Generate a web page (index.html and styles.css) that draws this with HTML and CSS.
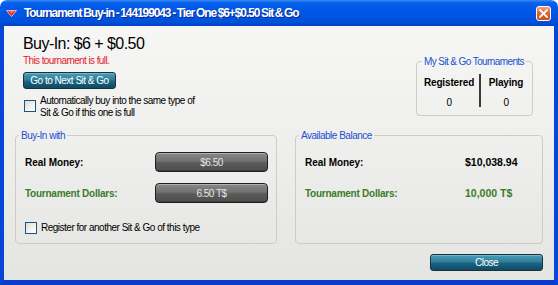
FILE: index.html
```
<!DOCTYPE html>
<html>
<head>
<meta charset="utf-8">
<link rel="stylesheet" href="styles.css">
</head>
<body>
<div class="window">
  <div class="titlebar">
    <svg class="ticon" width="11" height="7" viewBox="0 0 11 7"><path d="M0.5 0.5 L10.5 0.5 L5.5 6.5 Z" fill="#e0202a" stroke="#ffd0d0" stroke-width="0.8"/><path d="M2.5 1.2 L8.5 1.2 L5.5 3.2 Z" fill="#ff8080"/></svg>
    <span class="title">Tournament Buy-in - 144199043 - Tier One $6+$0.50 Sit &amp; Go</span>
    <span class="xbtn"><svg width="9" height="9" viewBox="0 0 9 9"><path d="M1 1 L8 8 M8 1 L1 8" stroke="#fff" stroke-width="1.8" stroke-linecap="square"/></svg></span>
  </div>
  <div class="body">
    <div class="top">
      <div class="info">
        <div class="heading">Buy-In: $6 + $0.50</div>
        <div class="full">This tournament is full.</div>
        <div class="btn-teal next">Go to Next Sit &amp; Go</div>
        <label class="check auto"><span class="box"></span><span class="ctext">Automatically buy into the same type of<br>Sit &amp; Go if this one is full</span></label>
      </div>
      <fieldset class="group mystg">
        <legend>My Sit &amp; Go Tournaments</legend>
        <div class="stats">
          <div class="col reg"><b>Registered</b><span class="zero">0</span></div>
          <div class="divider"></div>
          <div class="col play"><b>Playing</b><span class="zero">0</span></div>
        </div>
      </fieldset>
    </div>
    <div class="groups">
      <fieldset class="group buyin">
        <legend>Buy-In with</legend>
        <div class="row">
          <span class="lbl real">Real Money:</span>
          <div class="btn-gray">$6.50</div>
        </div>
        <div class="row second">
          <span class="lbl tdol">Tournament Dollars:</span>
          <div class="btn-gray">6.50 T$</div>
        </div>
        <label class="check reg2"><span class="box"></span><span class="ctext">Register for another Sit &amp; Go of this type</span></label>
      </fieldset>
      <fieldset class="group balance">
        <legend>Available Balance</legend>
        <div class="brow">
          <span class="lbl real">Real Money:</span>
          <span class="val real">$10,038.94</span>
        </div>
        <div class="brow second">
          <span class="lbl tdol">Tournament Dollars:</span>
          <span class="val tdol">10,000 T$</span>
        </div>
      </fieldset>
    </div>
    <div class="footer">
      <div class="btn-teal close">Close</div>
    </div>
  </div>
</div>
</body>
</html>
```
FILE: styles.css
```
html, body {
  margin: 0;
  padding: 0;
  background: #ffffff;
}
body {
  font-family: "Liberation Sans", Arial, sans-serif;
  font-size: 10px;
  letter-spacing: -0.5px;
  color: #000;
}
.window {
  width: 558px;
  height: 285px;
  display: flex;
  flex-direction: column;
}
.titlebar {
  height: 26px;
  flex: none;
  display: flex;
  align-items: center;
  border-radius: 7px 7px 0 0;
  background: linear-gradient(#3b8cf5 0, #0a63ec 10%, #005ae8 30%, #0055e3 60%, #0050db 85%, #0043c4 100%);
  color: #fff;
}
.ticon {
  margin-left: 6px;
  flex: none;
}
.title {
  margin-left: 7px;
  font-weight: bold;
  font-size: 12px;
  letter-spacing: -1.1px;
  word-spacing: -0.5px;
  text-shadow: 1px 1px 0 #0a2a8a;
  white-space: nowrap;
}
.xbtn {
  margin-left: auto;
  margin-right: 7px;
  width: 15px;
  height: 15px;
  box-sizing: border-box;
  border: 1px solid #fff;
  border-radius: 3px;
  background: linear-gradient(#f0a080 0, #e66a3e 40%, #d44a1c 100%);
  display: flex;
  align-items: center;
  justify-content: center;
}
.body {
  flex: 1;
  border-left: 4px solid #0846d8;
  border-right: 4px solid #0846d8;
  border-bottom: 5px solid #0a3ccc;
  background: linear-gradient(#f6f6f4 0, #eeeeec 50%, #e4e4e2 100%);
  display: flex;
  flex-direction: column;
}
.top {
  display: flex;
  justify-content: space-between;
  align-items: flex-start;
}
.info {
  padding-left: 19px;
  padding-top: 8px;
}
.heading {
  font-size: 16px;
  line-height: 20px;
  letter-spacing: -0.55px;
}
.full {
  color: #e4202c;
  line-height: 13px;
  letter-spacing: -0.6px;
}
.btn-teal {
  box-sizing: border-box;
  height: 17px;
  border: 1px solid #18323c;
  border-radius: 3px;
  background: linear-gradient(#4a9cb8 0, #2f7e9c 45%, #1a6482 55%, #0f4a62 100%);
  color: #fff;
  display: flex;
  align-items: center;
  justify-content: center;
  box-shadow: inset 0 1px 0 rgba(255,255,255,0.25);
}
.next {
  margin-top: 5px;
  width: 93px;
}
.check {
  display: flex;
  align-items: flex-start;
  gap: 4px;
  line-height: 12px;
}
.check .box {
  flex: none;
  width: 12px;
  height: 12px;
  box-sizing: border-box;
  border: 1px solid #1c5180;
  background: linear-gradient(135deg, #dcdcd6 0, #f4f4f0 60%, #ffffff 100%);
}
.auto {
  margin-top: 6px;
  margin-left: 1px;
}
.auto .box {
  margin-top: 5px;
}
.group {
  margin: 0;
  border: 1px solid #cdcdc6;
  border-radius: 4px;
  min-width: 0;
}
.group legend {
  color: #2150d0;
  line-height: 13px;
  padding: 0 2px;
  margin-left: -6px;
}
.mystg {
  width: 117px;
  box-sizing: border-box;
  flex: none;
  margin-top: 29px;
  margin-right: 21px;
  padding: 0 0 0 7px;
}
.mystg legend {
  margin-left: -2px;
  white-space: nowrap;
  letter-spacing: -0.6px;
}
.stats {
  display: flex;
  height: 47px;
}
.col {
  display: flex;
  flex-direction: column;
  align-items: center;
  padding-top: 8px;
  line-height: 13px;
  min-width: 0;
  flex: none;
}
.col b {
  letter-spacing: -0.15px;
  white-space: nowrap;
}
.reg {
  width: 50px;
}
.play {
  width: 34px;
}
.zero {
  margin-top: 7px;
}
.divider {
  flex: none;
  width: 2px;
  height: 33px;
  margin: 6px 8px 0 5px;
  background: #3a3a3a;
}
.groups {
  display: flex;
  gap: 18px;
  padding: 0 11px;
  margin-top: 10px;
}
.buyin {
  flex: 1;
  padding: 10px 8px 9px 9px;
}
.balance {
  width: 248px;
  box-sizing: border-box;
  flex: none;
  padding: 10px 24px 9px 9px;
}
.row {
  display: flex;
  align-items: center;
  justify-content: space-between;
  height: 20px;
}
.row.second, .brow.second {
  margin-top: 11px;
}
.lbl {
  font-weight: bold;
  letter-spacing: -0.05px;
}
.lbl.tdol {
  letter-spacing: -0.25px;
}
.lbl.tdol, .val.tdol {
  color: #3a7c2a;
}
.btn-gray {
  box-sizing: border-box;
  width: 113px;
  height: 20px;
  border: 1px solid #1e1e1e;
  border-radius: 4px;
  background: linear-gradient(#888888 0, #717171 45%, #5a5a5a 55%, #4e4e4e 100%);
  box-shadow: inset 0 1px 0 rgba(255,255,255,0.35), inset 0 -1px 0 rgba(0,0,0,0.2);
  color: #e6e6e6;
  display: flex;
  align-items: center;
  justify-content: center;
}
.reg2 {
  margin-top: 18px;
  align-items: center;
  line-height: 13px;
}
.brow {
  display: grid;
  grid-template-columns: 160px auto;
  align-items: center;
  height: 20px;
}
.val {
  font-weight: bold;
  font-size: 10.5px;
  letter-spacing: 0;
}
.footer {
  display: flex;
  justify-content: flex-end;
  padding-right: 11px;
  margin-top: 10px;
}
.close {
  width: 113px;
}
```
